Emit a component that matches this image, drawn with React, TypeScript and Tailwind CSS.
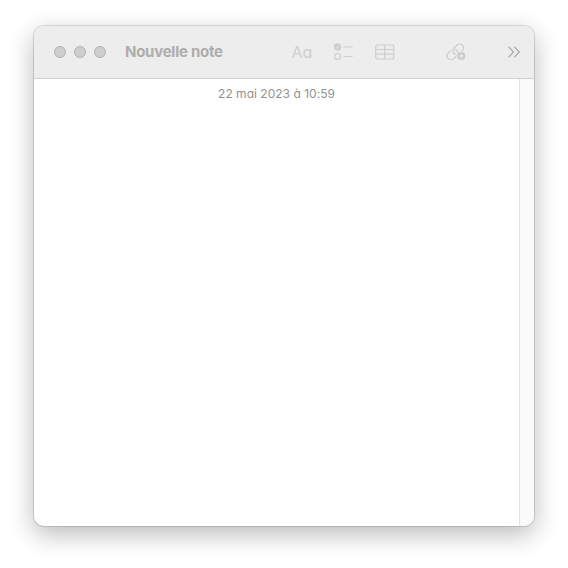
import React from 'react';

const WindowButton = ({ label }: { label: string }) => (
  <button aria-label={label} className="size-3 rounded-full border border-[#b3b3b3] bg-[#cecece]" />
);

const ChecklistIcon = () => (
  <svg width="20" height="18" viewBox="0 0 20 18" fill="none">
    <circle cx="3.5" cy="3.9" r="3.6" fill="#cbcbcb" />
    <path d="M1.9 4.2 3 5.4 5.1 2.4" stroke="#ededed" strokeWidth="1" />
    <circle cx="3.5" cy="13.5" r="3" stroke="#cbcbcb" strokeWidth="1.1" />
    <path d="M9.3 4h9.4M9.3 13.5h9.4" stroke="#cfcfcf" strokeWidth="1.2" />
  </svg>
);

const TableIcon = () => (
  <svg width="20" height="16" viewBox="0 0 20 16" fill="none" stroke="#cdcdcd" strokeWidth="1.2">
    <rect x="0.7" y="1" width="18.1" height="14" rx="2" />
    <path d="M1 5.5h18M1 10.2h18M9.7 1v14" />
  </svg>
);

const LinkIcon = () => (
  <svg width="20" height="18" viewBox="0 0 20 18" fill="none" stroke="#cbcbcb" strokeWidth="1.2" strokeLinecap="round">
    <path d="M10.1 11.5A3.9 3.9 0 0 1 7.7 5.2L10.8 2.2A3.9 3.9 0 0 1 16.4 7.8L15.6 8.5" />
    <path d="M8.9 6.3A3.9 3.9 0 0 1 10.8 12.6L7.8 15.6A3.9 3.9 0 0 1 2.2 10L4.6 7.6" />
    <circle cx="15.3" cy="13" r="4.8" fill="#ededed" stroke="none" />
    <circle cx="15.3" cy="13" r="4" fill="#c9c9c9" stroke="none" />
    <path d="M15.3 10.8v4.4M13.1 13h4.4" stroke="#ededed" strokeWidth="1.1" />
  </svg>
);

const MoreIcon = () => (
  <svg width="13" height="12" viewBox="0 0 13 12" fill="none" stroke="#aaaaaa" strokeWidth="1.15" strokeLinecap="round" strokeLinejoin="round">
    <path d="M.8 1l4.7 5L.8 11M6.6 1l4.7 5-4.7 5" />
  </svg>
);

export default function App() {
  return (
    <div className="h-[568px] w-[568px] overflow-hidden bg-white pt-[26px] pl-[34px] font-['Inter','Liberation_Sans',sans-serif] [font-feature-settings:'cv11']">
      <div className="flex size-[500px] flex-col overflow-hidden rounded-[10px] bg-white shadow-[0_0_0_1px_rgba(0,0,0,0.12),0_8px_26px_rgba(0,0,0,0.28)]">
        <header className="flex h-[53px] shrink-0 items-center border-b border-[#d0d0d0] bg-[#ededed] pl-5">
          <div className="flex gap-2">
            <WindowButton label="Fermer" />
            <WindowButton label="Réduire" />
            <WindowButton label="Agrandir" />
          </div>
          <h1 className="ml-[19px] w-[166.5px] text-[15px] leading-5 font-bold tracking-[-0.26px] text-[#adadad] [font-feature-settings:normal]">Nouvelle note</h1>
          <span className="w-[42.5px] text-[16px] leading-5 text-[#cecece]">Aa</span>
          <ChecklistIcon />
          <div className="ml-[21px]"><TableIcon /></div>
          <div className="ml-[51px]"><LinkIcon /></div>
          <div className="ml-[42px]"><MoreIcon /></div>
        </header>
        <div className="flex min-h-0 flex-1">
          <main className="flex-1 pt-[7px] text-center">
            <time className="block text-[12px] leading-4 tracking-[0.02px] text-[#929292]">22 mai 2023 à 10:59</time>
          </main>
          <aside className="w-[15px] border-l border-[#e3e3e3] bg-[#fafafa]" />
        </div>
      </div>
    </div>
  );
}
